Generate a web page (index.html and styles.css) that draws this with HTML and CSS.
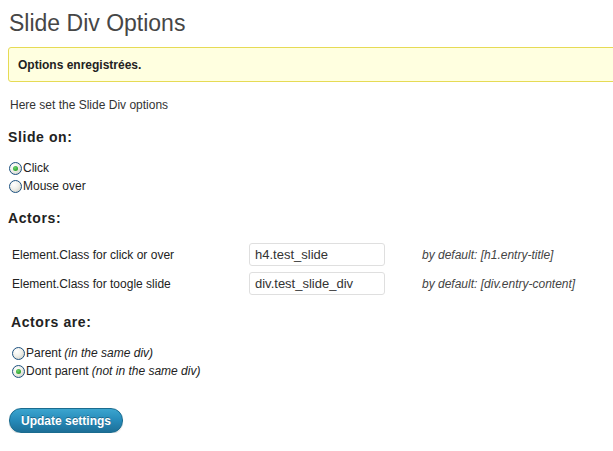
FILE: index.html
```html
<!DOCTYPE html>
<html>
<head>
<meta charset="utf-8">
<link rel="stylesheet" href="styles.css">
</head>
<body>
<div class="wrap">
  <h2 class="title">Slide Div Options</h2>
  <div class="notice"><p>Options enregistrées.</p></div>
  <p class="intro">Here set the Slide Div options</p>

  <h3 class="section">Slide on:</h3>
  <div class="radios">
    <label class="radio"><span class="dot checked"></span>Click</label>
    <label class="radio"><span class="dot"></span>Mouse over</label>
  </div>

  <h3 class="section actors">Actors:</h3>
  <div class="form-table">
    <div class="row">
      <span class="lbl">Element.Class for click or over</span>
      <span class="field">h4.test_slide</span>
      <span class="desc">by default: [h1.entry-title]</span>
    </div>
    <div class="row">
      <span class="lbl">Element.Class for toogle slide</span>
      <span class="field">div.test_slide_div</span>
      <span class="desc">by default: [div.entry-content]</span>
    </div>
  </div>

  <h3 class="section are">Actors are:</h3>
  <div class="radios indent">
    <label class="radio"><span class="dot"></span>Parent <em>(in the same div)</em></label>
    <label class="radio"><span class="dot checked"></span>Dont parent <em>(not in the same div)</em></label>
  </div>

  <div class="submit"><span class="button">Update settings</span></div>
</div>
</body>
</html>
```
FILE: styles.css
```css
html, body {
  margin: 0;
  padding: 0;
  background: #fff;
}
body {
  font-family: "Liberation Sans", Arial, sans-serif;
  font-size: 12px;
  color: #333;
  overflow: hidden;
}
.wrap {
  padding: 0 0 0 8px;
  margin-right: -20px;
}
.title {
  margin: 0;
  padding: 9px 0 0 1px;
  height: 38px;
  box-sizing: border-box;
  font-weight: normal;
  font-size: 23px;
  line-height: 29px;
  color: #464646;
}
.notice {
  margin-top: 9px;
  height: 35px;
  box-sizing: border-box;
  background: #ffffe0;
  border: 1px solid #e6db55;
  border-radius: 3px;
  display: flex;
  align-items: center;
  padding-left: 9px;
}
.notice p {
  margin: 0;
  font-weight: bold;
  font-size: 12px;
  color: #222;
}
.intro {
  margin: 15px 0 0 2px;
  line-height: 16px;
}
.section {
  margin: 15px 0 0 0;
  font-size: 14px;
  font-weight: bold;
  letter-spacing: 0.6px;
  line-height: 18px;
  color: #222;
}
.radios {
  margin-top: 13px;
  display: flex;
  flex-direction: column;
}
.radio {
  display: flex;
  align-items: center;
  height: 18px;
  font-size: 12px;
  color: #222;
}
.radio em {
  margin-left: 3px;
}
.dot {
  width: 11px;
  height: 11px;
  border-radius: 50%;
  border: 1px solid #1c5180;
  background: radial-gradient(circle at 35% 30%, #ffffff 0%, #f0f0ea 45%, #c8c8bf 100%);
  margin: 0 1px 0 1px;
  position: relative;
  flex: none;
}
.dot.checked::after {
  content: "";
  position: absolute;
  left: 3px;
  top: 3px;
  width: 5px;
  height: 5px;
  border-radius: 50%;
  background: radial-gradient(circle at 40% 35%, #6fd36f, #139013);
}
.actors {
  margin-top: 14px;
}
.form-table {
  margin-top: 16px;
  display: flex;
  flex-direction: column;
  gap: 6px;
}
.row {
  display: flex;
  align-items: center;
  height: 23px;
}
.lbl {
  width: 237px;
  padding-left: 4px;
  color: #222;
}
.field {
  box-sizing: border-box;
  width: 136px;
  height: 23px;
  border: 1px solid #dfdfdf;
  border-radius: 3px;
  padding: 0 5px;
  display: flex;
  align-items: center;
  font-size: 13px;
  color: #333;
}
.desc {
  margin-left: 37px;
  font-style: italic;
  color: #444;
}
.are {
  margin: 18px 0 0 3px;
}
.indent {
  margin-left: 3px;
  margin-top: 13px;
}
.submit {
  margin-top: 28px;
  padding-left: 1px;
}
.button {
  display: inline-flex;
  align-items: center;
  justify-content: center;
  box-sizing: border-box;
  width: 114px;
  height: 25px;
  border-radius: 12px;
  border: 1px solid #1b6c8f;
  background: linear-gradient(to bottom, #3ba5cf 0%, #268ab9 50%, #1d6f97 100%);
  color: #fff;
  font-weight: bold;
  font-size: 12px;
  text-shadow: 0 -1px 0 rgba(0,0,0,0.3);
  box-shadow: 0 1px 1px rgba(0,0,0,0.15);
}
```
